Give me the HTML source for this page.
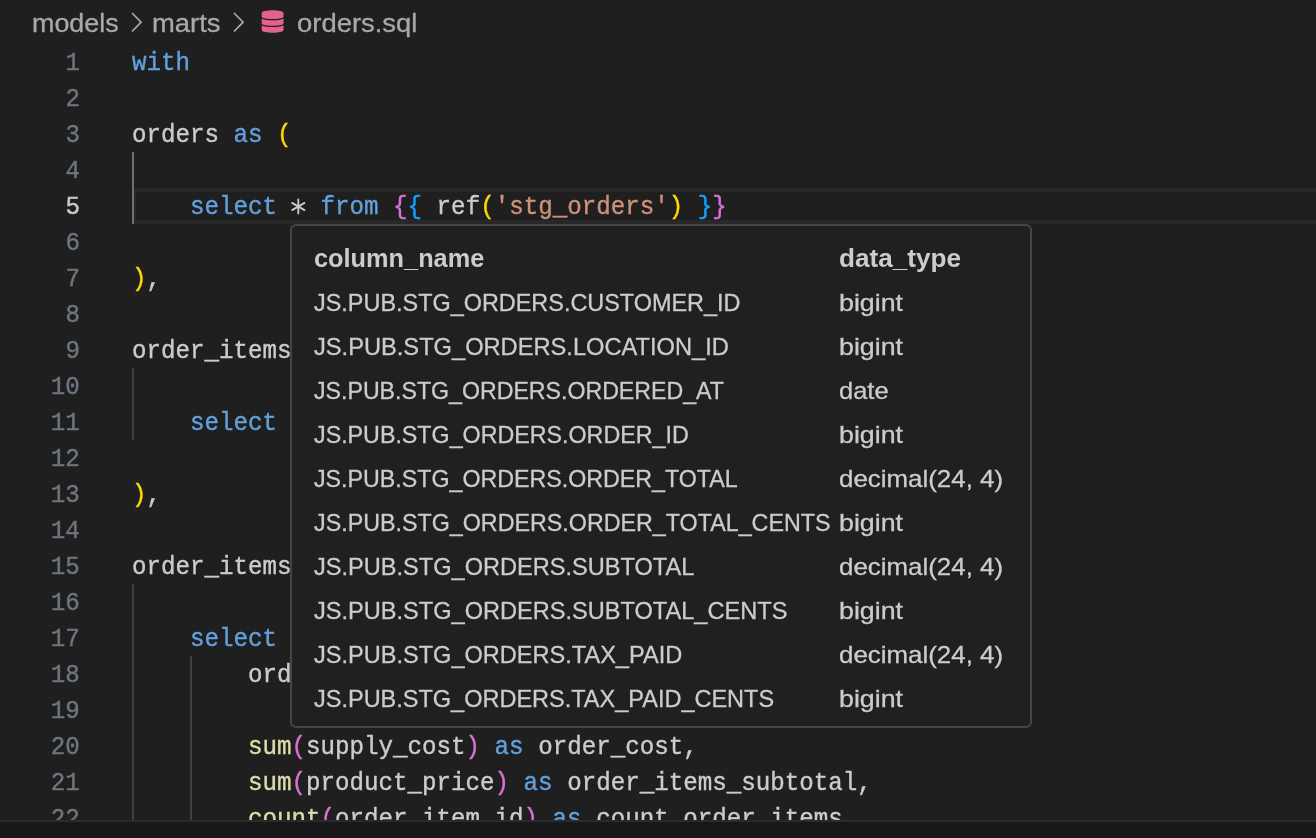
<!DOCTYPE html>
<html><head><meta charset="utf-8">
<style>
html,body{margin:0;padding:0;}
body{width:1316px;height:838px;overflow:hidden;background:#1f1f1f;position:relative;}
.wrap{position:absolute;left:0;top:0;width:1316px;height:838px;will-change:transform;}
.bc{position:absolute;white-space:pre;font-family:"Liberation Sans",sans-serif;font-size:26px;line-height:44px;top:1px;color:#a9a9a9;-webkit-text-stroke:0.3px currentColor;transform-origin:0 0;}
.ln{position:absolute;left:0;width:80px;text-align:right;font-family:"Liberation Mono",monospace;font-size:26.5px;line-height:36px;color:#6e7681;-webkit-text-stroke:0.4px currentColor;}
.ln span{display:inline-block;transform:scaleX(0.912);transform-origin:100% 0;}
.code{position:absolute;left:132px;font-family:"Liberation Mono",monospace;font-size:26.5px;line-height:36px;color:#cccccc;white-space:pre;-webkit-text-stroke:0.4px currentColor;transform:scaleX(0.912);transform-origin:0 0;}
.k{color:#62a0dc}.y{color:#ffd700}.p{color:#da70d6}.b{color:#179fff}.s{color:#ce9178}.f{color:#dcdcaa}
.guide{position:absolute;width:2px;background:#404040;}
.hl{position:absolute;left:132px;top:188px;width:1184px;height:36px;box-sizing:border-box;border:4px solid #282828;border-right:none;}
.tip{position:absolute;left:290px;top:224px;width:742px;height:504px;box-sizing:border-box;border:2px solid #454545;border-radius:6px;background:#202020;font-family:"Liberation Sans",sans-serif;font-size:24px;line-height:30px;color:#cccccc;-webkit-text-stroke:0.3px currentColor;}
.tip div{position:absolute;white-space:pre;transform-origin:0 0;}
.tip .h{font-weight:bold;-webkit-text-stroke:0px;font-size:25px;}
.panel{position:absolute;left:0;top:820px;width:1316px;height:18px;box-sizing:border-box;background:#181818;border-top:2px solid #2b2b2b;}
</style></head><body><div class="wrap">
<div class="bc" style="left:32px;transform:scaleX(1.0338999999999998)">models</div>
<div class="bc" style="left:152px;transform:scaleX(1.055)">marts</div>
<div class="bc" style="left:297px;transform:scaleX(1.055)">orders.sql</div>
<svg style="position:absolute;left:131.0px;top:12px" width="12" height="21" viewBox="0 0 12 21"><polyline points="1,1 10.1,10.2 1,19.5" fill="none" stroke="#a9a9a9" stroke-width="1.7"/></svg>
<svg style="position:absolute;left:232.5px;top:12px" width="12" height="21" viewBox="0 0 12 21"><polyline points="1,1 10.1,10.2 1,19.5" fill="none" stroke="#a9a9a9" stroke-width="1.7"/></svg>
<svg style="position:absolute;left:261px;top:10px" width="24" height="24" viewBox="0 0 24 24"><path d="M0.7,3 C0.7,-0.6 22.5,-0.6 22.5,3 L22.5,20 C22.5,23.6 0.7,23.6 0.7,20 Z" fill="#e4628b"/><path d="M0,7.4 C4,10.4 19,10.4 23.2,7.4" fill="none" stroke="#1f1f1f" stroke-width="1.2"/><path d="M0,14.2 C4,17.2 19,17.2 23.2,14.2" fill="none" stroke="#1f1f1f" stroke-width="1.2"/></svg>
<svg style="position:absolute;left:290px;top:198px" width="17" height="17" viewBox="0 0 17 17"><g stroke="#cccccc" stroke-width="1.8" stroke-linecap="round"><line x1="8.3" y1="1.4" x2="8.3" y2="15.6"/><line x1="2.1" y1="4.9" x2="14.5" y2="12.1"/><line x1="2.1" y1="12.1" x2="14.5" y2="4.9"/></g></svg>
<div class="hl"></div>
<div class="guide" style="left:132px;top:152px;height:72px;background:#707070"></div>
<div class="guide" style="left:132px;top:368px;height:72px"></div>
<div class="guide" style="left:132px;top:584px;height:236px"></div>
<div class="guide" style="left:190px;top:656px;height:164px"></div>
<div class="ln" style="top:45px"><span>1</span></div>
<div class="code" style="top:45px"><span class="k">with</span></div>
<div class="ln" style="top:81px"><span>2</span></div>
<div class="ln" style="top:117px"><span>3</span></div>
<div class="code" style="top:117px">orders <span class="k">as</span> <span class="y">(</span></div>
<div class="ln" style="top:153px"><span>4</span></div>
<div class="ln" style="top:189px;color:#cccccc"><span>5</span></div>
<div class="code" style="top:189px">    <span class="k">select</span>   <span class="k">from</span> <span class="p">{</span><span class="b">{</span> ref<span class="y">(</span><span class="s">&#x27;stg_orders&#x27;</span><span class="y">)</span> <span class="b">}</span><span class="p">}</span></div>
<div class="ln" style="top:225px"><span>6</span></div>
<div class="ln" style="top:261px"><span>7</span></div>
<div class="code" style="top:261px"><span class="y">)</span>,</div>
<div class="ln" style="top:297px"><span>8</span></div>
<div class="ln" style="top:333px"><span>9</span></div>
<div class="code" style="top:333px">order_items <span class="k">as</span> <span class="y">(</span></div>
<div class="ln" style="top:369px"><span>10</span></div>
<div class="ln" style="top:405px"><span>11</span></div>
<div class="code" style="top:405px">    <span class="k">select</span> * <span class="k">from</span> <span class="p">{</span><span class="b">{</span> ref<span class="y">(</span><span class="s">&#x27;stg_order_items&#x27;</span><span class="y">)</span> <span class="b">}</span><span class="p">}</span></div>
<div class="ln" style="top:441px"><span>12</span></div>
<div class="ln" style="top:477px"><span>13</span></div>
<div class="code" style="top:477px"><span class="y">)</span>,</div>
<div class="ln" style="top:513px"><span>14</span></div>
<div class="ln" style="top:549px"><span>15</span></div>
<div class="code" style="top:549px">order_items_summary <span class="k">as</span> <span class="y">(</span></div>
<div class="ln" style="top:585px"><span>16</span></div>
<div class="ln" style="top:621px"><span>17</span></div>
<div class="code" style="top:621px">    <span class="k">select</span></div>
<div class="ln" style="top:657px"><span>18</span></div>
<div class="code" style="top:657px">        order_id,</div>
<div class="ln" style="top:693px"><span>19</span></div>
<div class="ln" style="top:729px"><span>20</span></div>
<div class="code" style="top:729px">        <span class="f">sum</span><span class="p">(</span>supply_cost<span class="p">)</span> <span class="k">as</span> order_cost,</div>
<div class="ln" style="top:765px"><span>21</span></div>
<div class="code" style="top:765px">        <span class="f">sum</span><span class="p">(</span>product_price<span class="p">)</span> <span class="k">as</span> order_items_subtotal,</div>
<div class="ln" style="top:801px"><span>22</span></div>
<div class="code" style="top:801px">        <span class="f">count</span><span class="p">(</span>order_item_id<span class="p">)</span> <span class="k">as</span> count_order_items,</div>
<div class="tip">
<div class="h" style="left:22px;top:17px;transform:scaleX(1.013)">column_name</div><div class="h" style="left:547px;top:17px;transform:scaleX(1.046)">data_type</div>
<div style="left:22px;top:61.5px;transform:scaleX(0.976)">JS.PUB.STG_ORDERS.CUSTOMER_ID</div><div style="left:547px;top:61.5px;transform:scaleX(1.1146)">bigint</div>
<div style="left:22px;top:105.5px;transform:scaleX(0.9854)">JS.PUB.STG_ORDERS.LOCATION_ID</div><div style="left:547px;top:105.5px;transform:scaleX(1.1146)">bigint</div>
<div style="left:22px;top:149.5px;transform:scaleX(0.9646)">JS.PUB.STG_ORDERS.ORDERED_AT</div><div style="left:547px;top:149.5px;transform:scaleX(1.0625)">date</div>
<div style="left:22px;top:193.5px;transform:scaleX(0.9688)">JS.PUB.STG_ORDERS.ORDER_ID</div><div style="left:547px;top:193.5px;transform:scaleX(1.1146)">bigint</div>
<div style="left:22px;top:237.5px;transform:scaleX(0.9677)">JS.PUB.STG_ORDERS.ORDER_TOTAL</div><div style="left:547px;top:237.5px;transform:scaleX(1.0792)">decimal(24, 4)</div>
<div style="left:22px;top:281.5px;transform:scaleX(0.9698)">JS.PUB.STG_ORDERS.ORDER_TOTAL_CENTS</div><div style="left:547px;top:281.5px;transform:scaleX(1.1146)">bigint</div>
<div style="left:22px;top:325.5px;transform:scaleX(0.9823)">JS.PUB.STG_ORDERS.SUBTOTAL</div><div style="left:547px;top:325.5px;transform:scaleX(1.0792)">decimal(24, 4)</div>
<div style="left:22px;top:369.5px;transform:scaleX(0.9823)">JS.PUB.STG_ORDERS.SUBTOTAL_CENTS</div><div style="left:547px;top:369.5px;transform:scaleX(1.1146)">bigint</div>
<div style="left:22px;top:413.5px;transform:scaleX(0.9813)">JS.PUB.STG_ORDERS.TAX_PAID</div><div style="left:547px;top:413.5px;transform:scaleX(1.0792)">decimal(24, 4)</div>
<div style="left:22px;top:457.5px;transform:scaleX(0.9792)">JS.PUB.STG_ORDERS.TAX_PAID_CENTS</div><div style="left:547px;top:457.5px;transform:scaleX(1.1146)">bigint</div>
</div>
<div class="panel"></div>
</div></body></html>
